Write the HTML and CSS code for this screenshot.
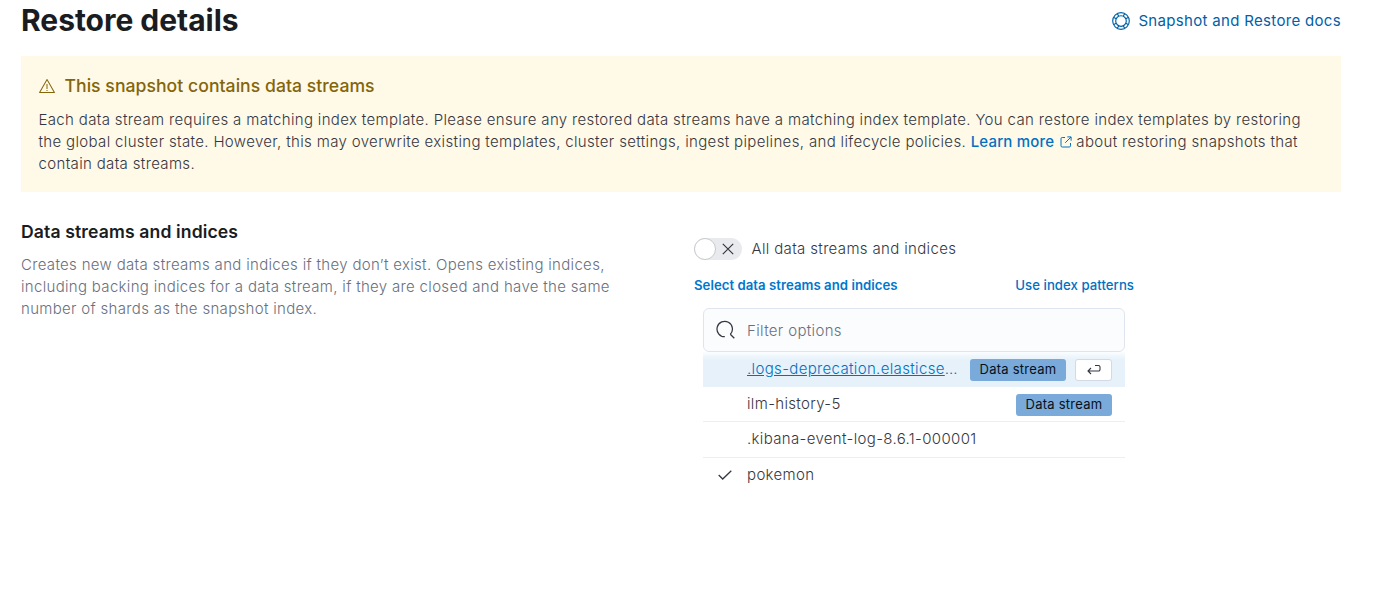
FILE: index.html
```html
<!DOCTYPE html>
<html lang="en">
<head>
<meta charset="utf-8">
<title>Restore details</title>
<link rel="stylesheet" href="styles.css">
</head>
<body>
<main class="page">
  <header class="header">
    <h1 class="title">Restore details</h1>
    <a class="docs"><svg class="docs-icon" viewBox="0 0 18 18" fill="none" stroke="currentColor" stroke-width="1.15"><circle cx="9" cy="9" r="8.3"/><circle cx="9" cy="9" r="5.3"/><path d="M5.4 1.900 6.800 4.200M1.900 5.400 4.200 6.800M12.600 1.900 11.200 4.200M16.100 5.400 13.800 6.800M5.400 16.100 6.800 13.800M1.900 12.600 4.200 11.200M12.600 16.100 11.200 13.800M16.100 12.600 13.800 11.200"/></svg><span>Snapshot and Restore docs</span></a>
  </header>
  <section class="callout">
    <h2 class="callout-title"><svg class="warn-icon" viewBox="0 0 16 16" fill="currentColor"><path fill-rule="evenodd" d="M7.6 1.25a.5.5 0 0 1 .87 0l7.4 13a.5.5 0 0 1-.44.75H.6a.5.5 0 0 1-.44-.75l7.44-13ZM8.03 2.5 1.46 14h13.1L8.03 2.5Z"/><path d="M7.5 6h1v5h-1zM7.5 12h1v1h-1z"/></svg><span>This snapshot contains data streams</span></h2>
    <p class="body callout-text">Each data stream requires a matching index template. Please ensure any restored data streams have a matching index template. You can restore index templates by restoring<br>the global cluster state. However, this may overwrite existing templates, cluster settings, ingest pipelines, and lifecycle policies. <a class="learn">Learn more</a><svg class="ext-icon" viewBox="0 0 12 12" fill="none" stroke="currentColor"><path d="M5 1.5H2.2a1.2 1.2 0 0 0-1.2 1.2v7.1A1.2 1.2 0 0 0 2.2 11h7.1a1.2 1.2 0 0 0 1.2-1.2V7M7.3.9h3.8v3.8M11 1 5.2 6.8"/></svg>about restoring snapshots that<br>contain data streams.</p>
  </section>
  <section class="columns">
    <div>
      <h3 class="subhead">Data streams and indices</h3>
      <p class="body muted">Creates new data streams and indices if they don’t exist. Opens existing indices,<br>including backing indices for a data stream, if they are closed and have the same<br>number of shards as the snapshot index.</p>
    </div>
    <div class="form">
      <div class="switch-row body"><span class="switch"><span class="thumb"></span><svg class="cross" viewBox="0 0 12 12" fill="none" stroke="currentColor" stroke-width="1.2"><path d="m.8.8 10.4 10.4M11.2.8.8 11.2"/></svg></span><span>All data streams and indices</span></div>
      <div class="labels"><span class="label">Select data streams and indices</span><a class="switch-link">Use index patterns</a></div>
      <div class="selectable">
        <div class="search body"><svg class="search-icon" viewBox="0 0 20 20" fill="none" stroke="currentColor" stroke-width="1.25"><path d="M8.800 16.700A7.700 7.700 0 1 1 14.300 14.300M14.300 14.300 18.300 18.300"/></svg><span>Filter options</span></div>
        <div class="list body">
          <div class="row active"><span class="name"><u>.logs-deprecation.elasticse</u>…</span><span class="badge">Data stream</span><span class="enter"><svg class="enter-icon" viewBox="0 0 14 12" fill="none" stroke="currentColor" stroke-width="1.1"><path d="M8 1.500h3.500A1.500 1.500 0 0 1 13 3v2.500A1.500 1.500 0 0 1 11.500 7H1M4 4 1 7l3 3"/></svg></span></div>
          <div class="row"><span class="name">ilm-history-5</span><span class="badge">Data stream</span></div>
          <div class="row third"><span class="name">.kibana-event-log-8.6.1-000001</span></div>
          <div class="row last"><svg class="check" viewBox="0 0 14 10" fill="none" stroke="currentColor" stroke-width="1.3"><path d="m.7 5 4 4L13.3.7"/></svg><span class="name">pokemon</span></div>
        </div>
      </div>
    </div>
  </section>
</main>
</body>
</html>
```
FILE: styles.css
```css
* { box-sizing: border-box; }
body { margin: 0; background: #fff; font-family: Inter, sans-serif; color: #343741; }
h1, h2, h3, p { margin: 0; }
svg { flex: none; }
.page { width: 1341px; padding-left: 21px; white-space: nowrap; }
.header { display: flex; justify-content: space-between; height: 56px; }
.title { font-size: 30px; line-height: 40px; font-weight: 700; letter-spacing: -0.03px; color: #1a1c21; }
.docs { display: flex; align-items: center; gap: 8px; height: 42px; color: #0061a6; font-size: 15px; letter-spacing: 0.32px; }
.docs span { padding-bottom: 2px; }
.docs-icon { width: 18px; height: 18px; }
.body { font-size: 15px; line-height: 22px; font-weight: 350; letter-spacing: 0.345px; }
.callout { height: 136px; padding: 17px 17.5px; background: #fff9e8; }
.callout-title { display: flex; align-items: center; gap: 10px; height: 24px; color: #83650a; font-size: 17.6px; font-weight: 500; letter-spacing: 0.04px; }
.warn-icon { width: 16px; height: 16px; margin-top: 1px; }
.callout-text { padding-top: 12px; }
.learn { color: #0071c2; font-weight: 500; letter-spacing: 0.2px; }
.ext-icon { width: 12px; height: 12px; margin: 0 4px 0 6px; vertical-align: -1px; color: #0071c2; }
.columns { display: grid; grid-template-columns: 673px 440px; padding-top: 28px; }
.subhead { color: #1a1c21; font-size: 17.6px; line-height: 24px; font-weight: 600; letter-spacing: 0.12px; }
.muted { color: #69707d; padding-top: 10px; letter-spacing: 0.32px; }
.form { padding-top: 17px; }
.switch-row { display: flex; align-items: center; gap: 9.5px; height: 24px; }
.switch { display: flex; align-items: center; justify-content: space-between; width: 48px; height: 22px; padding-right: 8px; border-radius: 11px; background: #e9eaee; }
.thumb { width: 22px; height: 22px; border: 1px solid #c9cacd; border-radius: 50%; background: #fff; }
.cross { width: 12px; height: 12px; }
.labels { display: flex; justify-content: space-between; padding-top: 15px; font-size: 13.2px; line-height: 18px; letter-spacing: 0.03px; color: #0071c2; }
.label { color: #0077cc; font-weight: 600; }
.switch-link { font-weight: 500; }
.selectable { width: 422px; margin: 14px 0 0 9px; }
.search { display: flex; align-items: center; gap: 11px; height: 44px; padding-left: 12px; border: 1px solid #e0e4ee; border-radius: 6px; background: #fbfcfe; color: #69707d; }
.search span { padding-top: 2px; }
.search-icon { width: 20px; height: 20px; color: #343741; }
.row { display: flex; align-items: center; height: 35px; padding: 0 13px 0 44px; border-bottom: 1px solid #eceef2; }
.row .name { flex: 1; }
.active { border-bottom-color: #e6f1fa; background: linear-gradient(#fafdff, #e6f1fa 8px); color: #0071c2; }
.badge { width: 96px; height: 22px; margin-top: 2px; border-radius: 3px; background: #79aad9; color: #07101a; text-align: center; font-size: 13px; font-weight: 400; line-height: 21px; letter-spacing: 0.25px; }
.enter { display: flex; align-items: center; justify-content: center; width: 37px; height: 22px; margin: 2px 0 0 9px; border: 1px solid #d3dae6; border-radius: 3px; background: #fff; color: #343741; }
.enter-icon { width: 14px; height: 12px; }
.third { height: 36px; padding-bottom: 1px; }
.last { height: 34px; border: 0; padding-left: 15px; gap: 15px; }
.check { width: 14px; height: 10px; }
```
